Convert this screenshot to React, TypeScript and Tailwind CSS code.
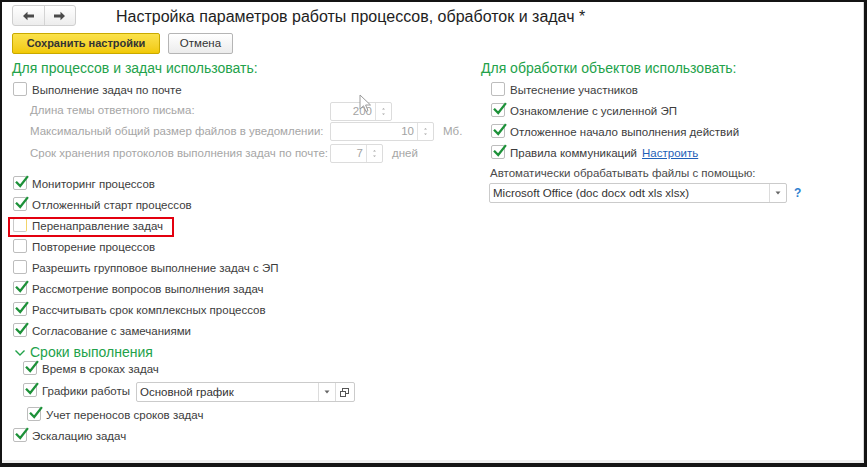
import React from "react";

const FONT = { fontFamily: '"Liberation Sans", Arial, sans-serif' };

const Box: React.FC<{ checked?: boolean; focus?: boolean }> = ({ checked, focus }) => (
  <span
    className={`relative inline-block w-[14px] h-[14px] shrink-0 rounded-[2px] border bg-white ${
      focus ? "border-[#c9c9c9] border-r-[#f2d46a]" : "border-[#bdbdbd]"
    }`}
  >
    {checked && (
      <svg className="absolute left-[1px] top-[-3px]" width="14" height="15" viewBox="0 0 14 15">
        <path d="M1.8 8.6 L5.2 12 L12.2 3" stroke="#1d9139" strokeWidth="2.3" fill="none" strokeLinecap="square" />
      </svg>
    )}
  </span>
);

const Check: React.FC<{ label: string; checked?: boolean; h?: string; focus?: boolean; children?: React.ReactNode }> = ({
  label,
  checked,
  h = "h-[21px]",
  focus,
  children,
}) => (
  <div className={`flex items-center ${h}`}>
    <span className="ml-[1px]">
      <Box checked={checked} focus={focus} />
    </span>
    <span className="ml-[5px] text-[11.5px] text-[#3c3c3c] whitespace-nowrap">{label}</span>
    {children}
  </div>
);

const Spin: React.FC = () => (
  <svg width="5" height="11" viewBox="0 0 5 11">
    <path d="M1 3.5 L2.5 2 L4 3.5Z" fill="#a8a8a8" />
    <path d="M1 7.5 L2.5 9 L4 7.5Z" fill="#a8a8a8" />
  </svg>
);

const NumField: React.FC<{ value: string; w: string }> = ({ value, w }) => (
  <div className={`flex h-[19px] shrink-0 ${w} border border-[#dcdcdc] rounded-[2px] bg-white`}>
    <span className="flex-1 text-right pr-[3px] text-[11.5px] leading-[17px] text-[#a3a3a3]">{value}</span>
    <span className="w-[16px] border-l border-[#e2e2e2] flex items-center justify-center">
      <Spin />
    </span>
  </div>
);

const Disabled: React.FC<{ label: string; h: string; children: React.ReactNode }> = ({ label, h, children }) => (
  <div className={`flex items-center ${h}`}>
    <span className="w-[318px] shrink-0 pl-[18px] text-[11.5px] text-[#a6a6a6] whitespace-nowrap">{label}</span>
    {children}
  </div>
);

const Arrow: React.FC<{ dir: "l" | "r" }> = ({ dir }) => (
  <svg width="13" height="10" viewBox="0 0 13 10" className={dir === "r" ? "rotate-180" : ""}>
    <path d="M1 5 L5.5 0.8 L5.5 3.6 L12 3.6 L12 6.4 L5.5 6.4 L5.5 9.2 Z" fill="#4a4a4a" />
  </svg>
);

const Caret: React.FC = () => (
  <svg width="6" height="4" viewBox="0 0 6 4">
    <path d="M0.5 0.5 L5.5 0.5 L3 3.5Z" fill="#666" />
  </svg>
);

export default function App() {
  return (
    <div style={FONT} className="w-[867px] h-[467px] bg-[#141414] pl-[2px] pt-[2px] pr-[3px] pb-[4px] flex">
      <div className="flex-1 flex flex-col bg-white border-r border-[#d8d8d8] border-b-[3px] border-b-[#eeeeee] relative overflow-hidden">
        {/* header */}
        <div className="flex items-center mt-[3px] h-[21px]">
          <div className="ml-[10px] flex h-[21px] w-[64px] rounded-[3px] border border-[#cfcfcf] bg-gradient-to-b from-white to-[#ededed]">
            <span className="flex-1 flex items-center justify-center border-r border-[#d4d4d4]">
              <Arrow dir="l" />
            </span>
            <span className="flex-1 flex items-center justify-center">
              <Arrow dir="r" />
            </span>
          </div>
          <span className="ml-[40px] mt-[3px] text-[16px] text-[#1e1e1e] whitespace-nowrap">
            Настройка параметров работы процессов, обработок и задач *
          </span>
        </div>

        <div className="flex items-center gap-[8px] ml-[10px] mt-[7px]">
          <button className="h-[21px] w-[148px] rounded-[2px] border border-[#c9a900] bg-gradient-to-b from-[#fbe24a] to-[#f1c900] text-[11px] font-bold text-[#333]">
            Сохранить настройки
          </button>
          <button className="h-[21px] w-[65px] rounded-[2px] border border-[#b5b5b5] bg-gradient-to-b from-white to-[#ececec] text-[11.5px] text-[#333]">
            Отмена
          </button>
        </div>

        <div className="flex mt-[4px] ml-[10px]">
          {/* left column */}
          <div className="w-[469px] flex flex-col">
            <div className="h-[20px] flex items-center text-[14px] text-[#22a24a] whitespace-nowrap">
              Для процессов и задач использовать:
            </div>
            <div className="h-[2px]" />
            <Check label="Выполнение задач по почте" />
            <Disabled label="Длина темы ответного письма:" h="h-[20px]">
              <NumField value="200" w="w-[62px]" />
            </Disabled>
            <Disabled label="Максимальный общий размер файлов в уведомлении:" h="h-[21px]">
              <NumField value="10" w="w-[104px]" />
              <span className="ml-[9px] text-[11.5px] text-[#a6a6a6]">Мб.</span>
            </Disabled>
            <Disabled label="Срок хранения протоколов выполнения задач по почте:" h="h-[23px]">
              <NumField value="7" w="w-[53px]" />
              <span className="ml-[9px] text-[11.5px] text-[#a6a6a6]">дней</span>
            </Disabled>
            <div className="h-[9px]" />
            <Check label="Мониторинг процессов" checked />
            <Check label="Отложенный старт процессов" checked />
            <div className="relative">
              <Check label="Перенаправление задач" focus />
              <span className="absolute left-[-4px] top-[1px] w-[166px] h-[20px] border-2 border-[#e3000f]" />
            </div>
            <Check label="Повторение процессов" />
            <Check label="Разрешить групповое выполнение задач с ЭП" />
            <Check label="Рассмотрение вопросов выполнения задач" checked />
            <Check label="Рассчитывать срок комплексных процессов" checked />
            <Check label="Согласование с замечаниями" checked h="h-[22px]" />
            <div className="h-[18px] flex items-center">
              <svg width="12" height="8" viewBox="0 0 12 8" className="ml-[2px] mt-[2px]">
                <path d="M1.5 1.5 L6 6 L10.5 1.5" stroke="#22a24a" strokeWidth="1.4" fill="none" />
              </svg>
              <span className="ml-[4px] text-[14px] text-[#22a24a] whitespace-nowrap">Сроки выполнения</span>
            </div>
            <div className="pl-[10px] flex flex-col">
              <Check label="Время в сроках задач" checked h="h-[17px]" />
              <Check label="Графики работы" checked h="h-[28px]">
                <div className="ml-[6px] flex h-[20px] w-[219px] border border-[#cbcbcb] rounded-[2px] bg-white">
                  <span className="flex-1 pl-[3px] text-[11.5px] leading-[18px] text-[#333]">Основной график</span>
                  <span className="w-[17px] border-l border-[#dcdcdc] flex items-center justify-center">
                    <Caret />
                  </span>
                  <span className="w-[19px] border-l border-[#dcdcdc] flex items-center justify-center">
                    <svg width="11" height="11" viewBox="0 0 11 11">
                      <rect x="3.5" y="1.5" width="6" height="5" fill="none" stroke="#555" />
                      <rect x="1.5" y="4.5" width="5" height="5" fill="#fff" stroke="#555" />
                    </svg>
                  </span>
                </div>
              </Check>
              <div className="pl-[4px]">
                <Check label="Учет переносов сроков задач" checked h="h-[20px]" />
              </div>
            </div>
            <Check label="Эскалацию задач" checked h="h-[22px]" />
          </div>

          {/* right column */}
          <div className="flex flex-col">
            <div className="h-[20px] flex items-center text-[14px] text-[#22a24a] whitespace-nowrap">
              Для обработки объектов использовать:
            </div>
            <div className="h-[2px]" />
            <div className="pl-[9px] flex flex-col">
              <Check label="Вытеснение участников" />
              <Check label="Ознакомление с усиленной ЭП" checked />
              <Check label="Отложенное начало выполнения действий" checked />
              <Check label="Правила коммуникаций" checked>
                <span className="ml-[5px] text-[11.5px] text-[#1f5fb8] underline">Настроить</span>
              </Check>
            </div>
            <div className="h-[20px] flex items-center pl-[9px] text-[11.5px] text-[#4a4a4a] whitespace-nowrap">
              Автоматически обрабатывать файлы с помощью:
            </div>
            <div className="flex items-center mt-[-1px] ml-[8px]">
              <div className="flex h-[20px] w-[298px] border border-[#cbcbcb] rounded-[2px] bg-white">
                <span className="flex-1 pl-[3px] text-[11.5px] leading-[18px] text-[#333] whitespace-nowrap">
                  Microsoft Office (doc docx odt xls xlsx)
                </span>
                <span className="w-[17px] border-l border-[#dcdcdc] flex items-center justify-center">
                  <Caret />
                </span>
              </div>
              <span className="ml-[7px] text-[12px] font-bold text-[#2f7fd0]">?</span>
            </div>
          </div>
        </div>

        {/* mouse cursor */}
        <svg className="absolute left-[357px] top-[92px]" width="14" height="20" viewBox="0 0 14 20">
          <path d="M1 1 L1 15 L4.5 11.8 L7 17.5 L9 16.6 L6.6 11 L11.5 11 Z" fill="#fff" stroke="#9a9a9a" strokeWidth="1" />
        </svg>
      </div>
    </div>
  );
}
